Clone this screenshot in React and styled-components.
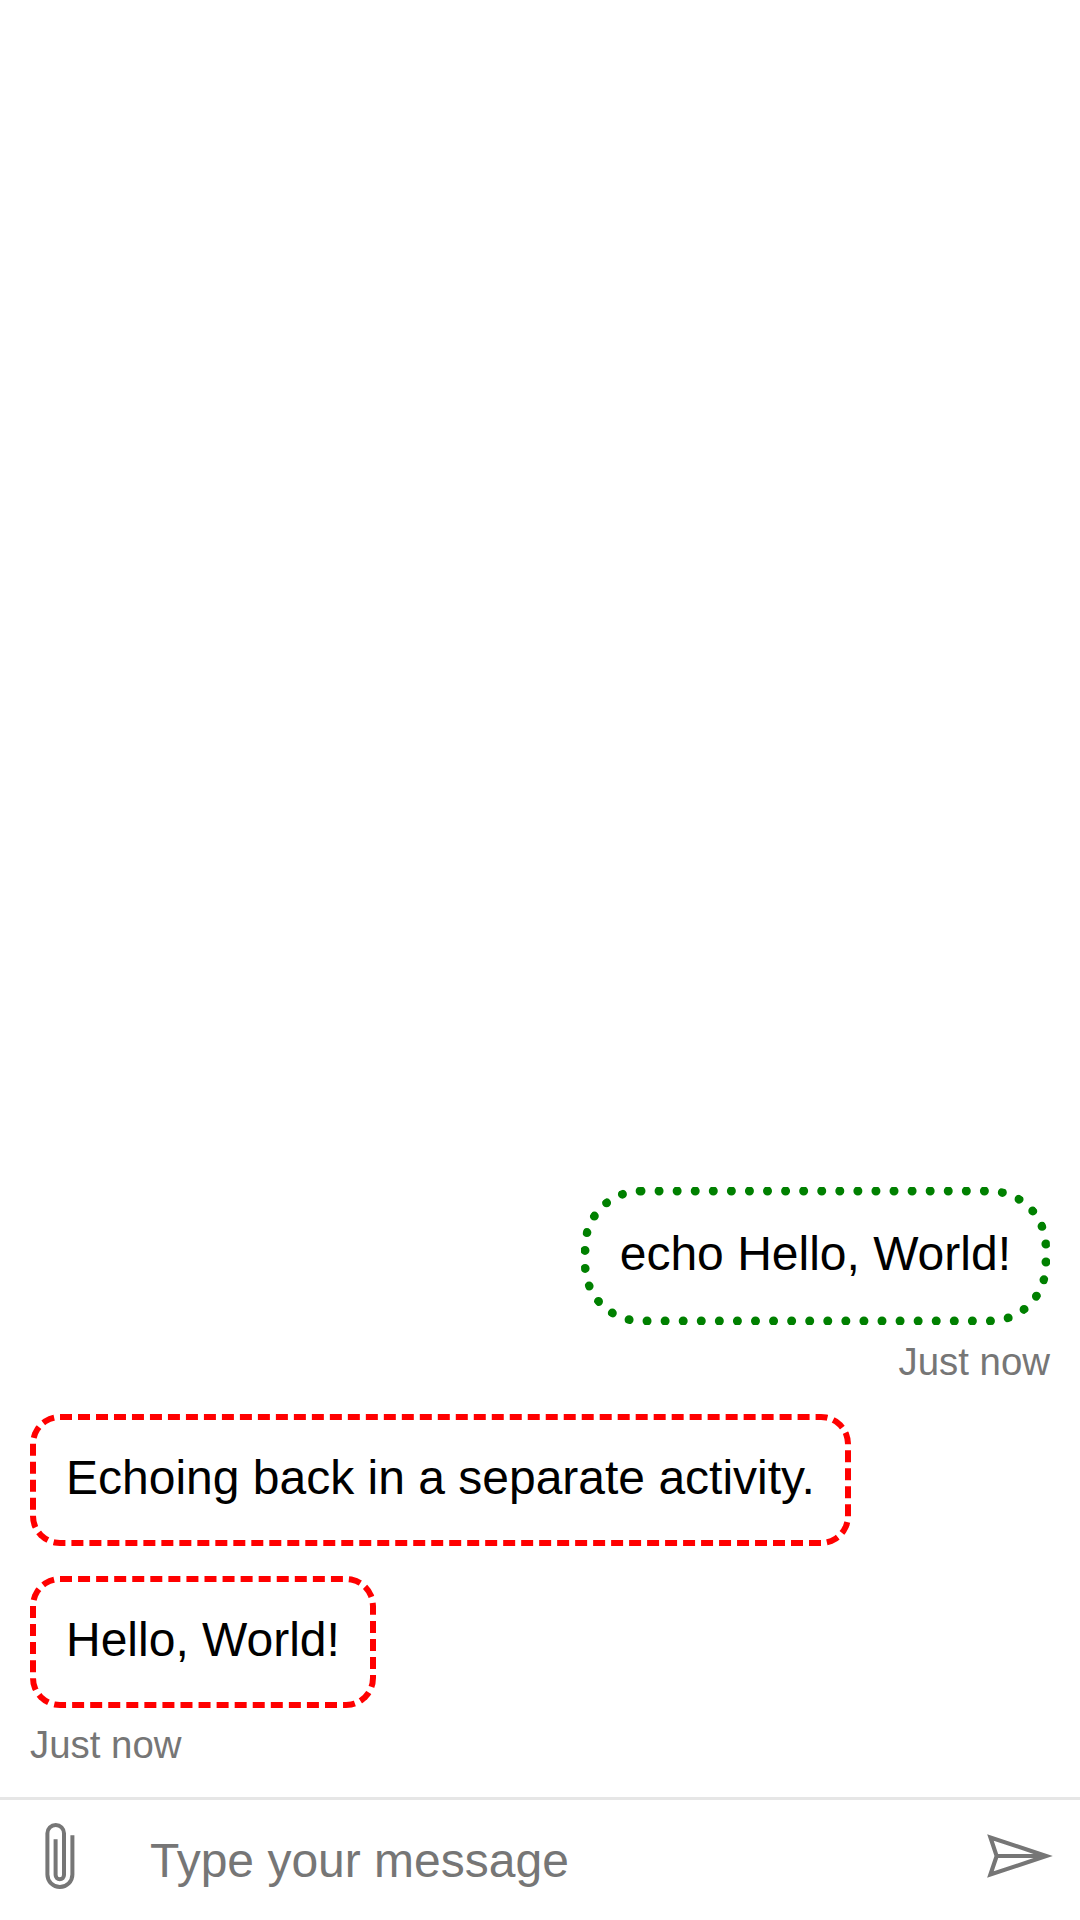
import React from "react";
import styled, { createGlobalStyle } from "styled-components";

const Global = createGlobalStyle`
  body { margin: 0; background: #fff; }
  * { box-sizing: border-box; }
`;

const Chat = styled.main`
  display: flex;
  flex-direction: column;
  height: 1920px;
  width: 1080px;
  background: #fff;
  font-family: "Liberation Sans", Arial, sans-serif;
`;

const Transcript = styled.section`
  flex: 1;
  display: flex;
  flex-direction: column;
  justify-content: flex-end;
  padding: 0 30px 30px;
`;

const Activity = styled.div`
  display: flex;
  flex-direction: column;
  align-items: ${(p) => (p.$fromUser ? "flex-end" : "flex-start")};
  margin-top: 30px;
`;

const Bubble = styled.div`
  border: ${(p) => (p.$fromUser ? "9px dotted green" : "6px dashed red")};
  border-radius: ${(p) => (p.$fromUser ? "60px" : "30px")};
  padding: 30px 30px 34px;
  font-size: 48px;
  line-height: 56px;
  color: #000;
  white-space: nowrap;
`;

const Timestamp = styled.span`
  padding-top: 15px;
  font-size: 38.4px;
  line-height: 44px;
  color: #767676;
`;

const SendBox = styled.form`
  display: flex;
  align-items: stretch;
  height: 123px;
  border-top: 3px solid #e6e6e6;
`;

const IconButton = styled.button`
  display: flex;
  align-items: center;
  justify-content: center;
  width: 120px;
  padding: 0 0 8px;
  border: 0;
  background: transparent;
  color: #767676;
`;

const MessageInput = styled.input`
  flex: 1;
  min-width: 0;
  padding: 0 30px;
  border: 0;
  outline: 0;
  background: transparent;
  font: 48px "Liberation Sans", Arial, sans-serif;
  &::placeholder { color: #767676; opacity: 1; }
`;

const Icon = styled.svg`
  display: block;
  fill: currentColor;
`;

const OutlineIcon = styled(Icon)`
  fill: none;
  stroke: currentColor;
  stroke-width: 4;
`;

const activities = [
  { text: "echo Hello, World!", fromUser: true, time: "Just now" },
  { text: "Echoing back in a separate activity." },
  { text: "Hello, World!", time: "Just now" },
];

export default function App() {
  return (
    <Chat>
      <Global />
      <Transcript>
        {activities.map((a) => (
          <Activity key={a.text} $fromUser={a.fromUser}>
            <Bubble $fromUser={a.fromUser}>{a.text}</Bubble>
            {a.time && <Timestamp>{a.time}</Timestamp>}
          </Activity>
        ))}
      </Transcript>
      <SendBox>
        <IconButton type="button" aria-label="Upload file">
          <OutlineIcon width="30" height="66" viewBox="0 0 30 66">
            <path d="M27.4 12.3V51.5a12.5 12.5 0 0 1-25 0V10.3a8.3 8.3 0 0 1 16.6 0V52a4.2 4.2 0 0 1-8.4 0V16.2" />
          </OutlineIcon>
        </IconButton>
        <MessageInput placeholder="Type your message" />
        <IconButton type="button" aria-label="Send">
          <Icon width="84" height="84" viewBox="0 0 45.7 33.8">
            <path clipRule="evenodd" d="M8.55 25.25l21.67-7.25H11zm2.41-9.47h19.26l-21.67-7.23zm-6 13l4-11.9L5 5l35.7 11.9z" fillRule="evenodd" />
          </Icon>
        </IconButton>
      </SendBox>
    </Chat>
  );
}
